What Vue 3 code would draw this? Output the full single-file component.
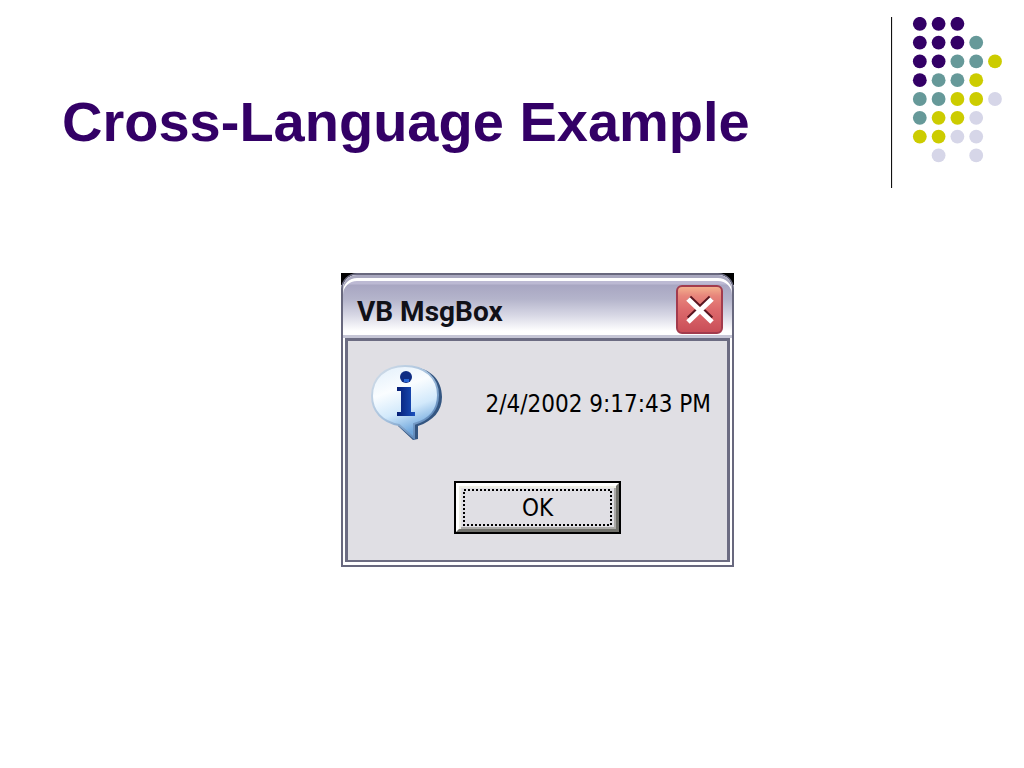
<template>
  <div class="slide">
    <header class="slide-header">
      <h1 class="title">Cross-Language Example</h1>
      <svg class="dots" viewBox="0 0 111 171" aria-hidden="true">
        <path d="M0.5 0V171" stroke="#111" stroke-width="1.2" />
        <circle v-for="(dot, i) in dots" :key="i" :cx="dot.x" :cy="dot.y" r="6.9" :fill="dot.color" />
      </svg>
    </header>

    <main class="content">
      <section v-if="open" class="msgbox" role="dialog" aria-labelledby="msgbox-title">
        <div class="frame">
          <div class="titlebar">
            <h2 id="msgbox-title" class="msgbox-title">VB MsgBox</h2>
            <button class="close-btn" aria-label="Close" @click="close">
              <svg viewBox="0 0 32 30" aria-hidden="true">
                <path d="M5 3L27 24M27 3L5 24" fill="none" stroke="#5a1620" stroke-width="6" />
                <path d="M4 4L28 27M28 4L4 27" fill="none" stroke="#fff" stroke-width="5" />
              </svg>
            </button>
          </div>
          <div class="panel">
            <div class="message">
              <svg class="info-icon" viewBox="0 0 76 80" aria-hidden="true">
                <defs>
                  <linearGradient id="bubble" x1="0" y1="0" x2="0.35" y2="1">
                    <stop offset="0" stop-color="#e0eefa" />
                    <stop offset="0.4" stop-color="#fafdff" />
                    <stop offset="0.7" stop-color="#d2e9fb" />
                    <stop offset="1" stop-color="#6ea6dc" />
                  </linearGradient>
                  <linearGradient id="bubble-edge" x1="0" y1="0" x2="1" y2="1">
                    <stop offset="0" stop-color="#d6dfe9" />
                    <stop offset="0.5" stop-color="#a3bfdc" />
                    <stop offset="1" stop-color="#386ba8" />
                  </linearGradient>
                  <linearGradient id="letter" x1="0" y1="0" x2="1" y2="0">
                    <stop offset="0" stop-color="#061e75" />
                    <stop offset="1" stop-color="#1a50bd" />
                  </linearGradient>
                </defs>
                <path d="M42 6C61 6 74 18 74 36C74 50 65 60 50 65V78L45 79L30 65Z" fill="#345681" />
                <path d="M37 5C57 5 70 17 70 34C70 49 61 59 46 63V77L31 64C14 61 4 50 4 35C4 17 17 5 37 5Z" fill="url(#bubble)" stroke="url(#bubble-edge)" stroke-width="2" />
                <circle cx="38" cy="16" r="6" fill="#102d83" />
                <path d="M36 18h5v3h-5z" fill="#2a67d5" />
                <path d="M29 26H43V51H47V55H29V51H33V30H29Z" fill="url(#letter)" />
              </svg>
              <p class="message-text">2/4/2002 9:17:43 PM</p>
            </div>
            <button class="ok-btn" @click="close">
              <span class="ok-face">
                <svg class="focus-ring" aria-hidden="true">
                  <rect x="1" y="1" width="100%" height="100%" />
                </svg>
                <span>OK</span>
              </span>
            </button>
          </div>
        </div>
      </section>
    </main>
  </div>
</template>

<script setup>
import { ref } from 'vue';

const open = ref(true);

const close = () => {
  open.value = false;
};

const colors = { p: '#330066', t: '#669999', y: '#cccc00', l: '#d6d6e8' };

// one string per row, a space leaves the cell empty
const pattern = ['ppp', 'pppt', 'pptty', 'ptty', 'ttyyl', 'tyyl', 'yyll', ' l l'];

const dots = pattern.flatMap((row, r) =>
  [...row]
    .map((cell, c) => ({ x: 28.8 + c * 18.8, y: 6.8 + r * 18.8, color: colors[cell] }))
    .filter((dot) => dot.color)
);
</script>

<style>
body {
  margin: 0;
  background: #fff;
}
</style>

<style scoped>
.slide {
  min-height: 100vh;
  background: #fff;
  font-family: "Liberation Sans", Arial, sans-serif;
}

.slide-header {
  display: flex;
  justify-content: space-between;
  align-items: flex-start;
  padding: 17px 22px 0 62px;
}

.title {
  margin: 72px 0 0;
  font-size: 56px;
  line-height: 66px;
  font-weight: bold;
  color: #330066;
}

.dots {
  flex: none;
  width: 111px;
  height: 171px;
}

.content {
  display: flex;
  justify-content: center;
  padding: 85px 0 40px 51px;
}

.msgbox {
  box-sizing: border-box;
  width: 393px;
  max-width: 100%;
  background: linear-gradient(#000 12px, transparent 12px);
}

.frame {
  padding: 0 2px 3px;
  border: 2px solid #68687e;
  border-radius: 16px 16px 0 0;
  background: #fff;
}

.titlebar {
  display: flex;
  justify-content: space-between;
  align-items: center;
  height: 63px;
  box-sizing: border-box;
  margin: 0 -2px;
  padding: 6px 9px 0 14px;
  border-radius: 14px 14px 0 0;
  background: linear-gradient(#bcb9d3 9px, #a8a6c2 10px, #b4b4cb 24px, #d9d9e6 41px, #fff 56px, #fff 60px, #c6c6d6 60px);
  box-shadow: inset 0 3px #a9a8bf, inset 0 6px #fff;
}

.msgbox-title {
  margin: 4px 0 0;
  font-family: Roboto, sans-serif;
  font-size: 28px;
  line-height: 32px;
  font-weight: bold;
  color: #111118;
}

.close-btn {
  display: flex;
  align-items: center;
  justify-content: center;
  width: 47px;
  height: 49px;
  padding: 0;
  border: 2px solid #a23b4d;
  border-radius: 6px;
  background: linear-gradient(#f3b08d, #e7857b 20%, #dd6a6c 50%, #c94e58);
}

.close-btn svg {
  width: 32px;
  height: 34px;
}

.panel {
  display: flex;
  flex-direction: column;
  align-items: center;
  padding: 20px 16px 26px 20px;
  border: 3px solid #6c6c82;
  border-bottom-width: 2px;
  background: #e0dfe4;
}

.message {
  display: flex;
  align-items: center;
  justify-content: space-between;
  width: 100%;
}

.info-icon {
  flex: none;
  width: 76px;
  height: 80px;
}

.message-text {
  margin: 6px 0 0;
  font-family: "DejaVu Sans Condensed", "DejaVu Sans", sans-serif;
  font-size: 24px;
  line-height: 32px;
  color: #000;
}

.ok-btn {
  width: 167px;
  height: 53px;
  margin: 40px 4px 0 0;
  padding: 0;
  border: 2px solid #000;
  background: #e0dfe4;
  font-family: "DejaVu Sans Condensed", "DejaVu Sans", sans-serif;
  font-size: 24px;
  color: #000;
}

.ok-face {
  position: relative;
  display: flex;
  align-items: center;
  justify-content: center;
  height: 100%;
  box-sizing: border-box;
  border: 3px solid;
  border-color: #fff #6f6f69 #6f6f69 #fff;
  box-shadow: inset 2px 2px #eeeee6, inset -2px -2px #aaa9a6;
}

/* dotted focus rectangle drawn over the button face */
.focus-ring {
  position: absolute;
  inset: 3px 4px 3px 4px;
  width: calc(100% - 8px);
  height: calc(100% - 6px);
}

.focus-ring rect {
  width: calc(100% - 2px);
  height: calc(100% - 2px);
  fill: none;
  stroke: #000;
  stroke-width: 2;
  stroke-dasharray: 2 2;
}
</style>
